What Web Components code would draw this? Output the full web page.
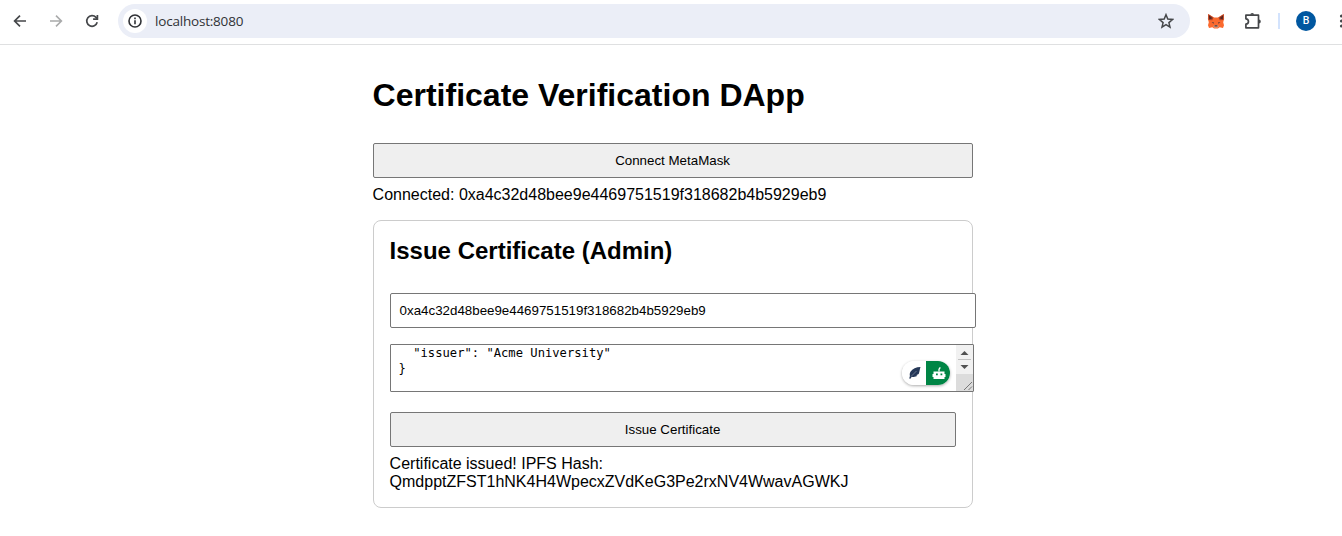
<!DOCTYPE html>
<html lang="en">
<head>
<meta charset="utf-8">
<title>Certificate Verification DApp</title>
<style>
html, body { margin: 0; height: 100%; overflow: hidden; background: #fff; }
body { font-family: "Liberation Sans", Arial, sans-serif; font-size: 16px; color: #000; }
</style>
</head>
<body>
<browser-toolbar>localhost:8080</browser-toolbar>
<dapp-page>
  <action-button>Connect MetaMask</action-button>
  <status-text slot="status">Connected: 0xa4c32d48bee9e4469751519f318682b4b5929eb9</status-text>
  <issue-card slot="card">
    <span slot="title">Issue Certificate (Admin)</span>
    <address-field slot="fields">0xa4c32d48bee9e4469751519f318682b4b5929eb9</address-field>
    <metadata-field slot="fields">  "issuer": "Acme University"
}</metadata-field>
    <action-button slot="fields">Issue Certificate</action-button>
    <status-text slot="fields">Certificate issued! IPFS Hash: QmdpptZFST1hNK4H4WpecxZVdKeG3Pe2rxNV4WwavAGWKJ</status-text>
  </issue-card>
</dapp-page>
<script>
function define(name, markup) {
  const template = document.createElement('template');
  template.innerHTML = markup;
  customElements.define(name, class extends HTMLElement {
    constructor() {
      super();
      this.attachShadow({ mode: 'open' }).appendChild(template.content.cloneNode(true));
    }
  });
}

define('browser-toolbar', `
<style>
:host { display: flex; align-items: center; box-sizing: border-box; height: 45px; width: 1355px; padding: 0 0 3px 12px; border-bottom: 1px solid #dfe0e1; background: #fff; }
svg { display: block; flex: none; }
.nav { display: flex; gap: 20px; width: 106px; flex: none; }
.bar { display: flex; align-items: center; box-sizing: border-box; width: 1072px; height: 34px; padding: 0 16px 0 4px; border-radius: 17px; background: #ebeef7; flex: none; }
.info { display: grid; place-items: center; width: 24px; height: 24px; margin: 0 1px; border-radius: 50%; background: #fff; }
.url { flex: 1; margin-left: 7px; font: 13.5px/20px "Open Sans", sans-serif; letter-spacing: -.2px; color: #303236; }
.fox { margin-left: 17px; }
.ext { margin-left: 18px; }
.sep { width: 2px; height: 16px; margin-left: 15px; background: #d3e3fd; flex: none; }
.avatar { display: grid; place-items: center; width: 20px; height: 20px; margin-left: 16px; border-radius: 50%; background: #0057a0; color: #fff; font: 500 10.5px/20px Roboto, sans-serif; flex: none; }
.menu { margin-left: 16px; }
</style>
<div class="nav">
  <svg width="16" height="16" viewBox="0 0 16 16" fill="none" stroke="#45474a" stroke-width="1.7"><path d="M14 8H3M8 2.6 2.6 8 8 13.4"/></svg>
  <svg width="16" height="16" viewBox="0 0 16 16" fill="none" stroke="#a9aaab" stroke-width="1.6"><path d="M2 8h11M8 2.6 13.4 8 8 13.4"/></svg>
  <svg width="16" height="16" viewBox="0 0 16 16" fill="none" stroke="#45474a" stroke-width="1.7"><path d="M13.2 9.3A5.3 5.3 0 1 1 12 4.4L13.2 5.7"/><path d="M13.4 2v4.2H9.1"/></svg>
</div>
<div class="bar">
  <div class="info"><svg width="16" height="16" viewBox="0 0 16 16" fill="none" stroke="#303236" stroke-width="1.6"><circle cx="8" cy="8" r="6"/><path d="M8 7.2v4M8 4.6v1.6"/></svg></div>
  <div class="url"><slot></slot></div>
  <svg width="16" height="16" viewBox="0 0 16 16" fill="none" stroke="#45474a" stroke-width="1.5"><path d="m8 1.7 1.8 4.4 4.7.4-3.6 3.1 1.1 4.6L8 11.7l-4 2.5 1.1-4.6-3.6-3.1 4.700-.4z"/></svg>
</div>
<svg class="fox" width="18" height="16" viewBox="0 0 18 16">
  <path d="M1.200 1 7 4.600h4L16.800 1l.3 5-.9 3.200.8 3-1 2.800-3.300-.7-1.800 1.200H7.100l-1.800-1.200-3.300.7-1-2.800.8-3L.9 6z" fill="#fb6a2e"/>
  <path d="M1.200 1 6.500 4.400 5.300 7.200 1.400 7zM16.800 1l-5.300 3.400 1.200 2.800 3.900-.2z" fill="#b5452a"/>
  <path d="M1.900 2.200 5.600 5.300 2.200 6.600zM16.100 2.200l-3.700 3.100 3.400 1.300z" fill="#5b251d"/>
  <path d="m4.600 8.900 2.400.6-.5 1.200zM13.400 8.900l-2.400.6.500 1.200z" fill="#4b3b3f"/>
  <path d="m6.300 13 1.400-1h2.600l1.400 1-.8 1.500H7.100z" fill="#dfa58c"/><path d="M7.600 12.300h2.800l.3 1.300H7.300z" fill="#4a3230"/>
</svg>
<svg class="ext" width="20" height="20" viewBox="0 0 20 20" fill="none" stroke="#45474a" stroke-width="1.700"><path d="M2.900 4.200h12.600v12.600H2.900v-3.600c3.400-.4 3.400-5 0-5.400z" stroke-linejoin="round"/><path d="M7.300 3.800a1.900 1.900 0 0 1 3.800 0zM15.900 8.600a1.900 1.900 0 0 1 0 3.800z" fill="#45474a" stroke="none"/></svg>
<div class="sep"></div>
<div class="avatar">B</div>
<svg class="menu" width="18" height="16" viewBox="0 0 18 16" fill="#45474a"><circle cx="9.500" cy="3" r="1.600"/><circle cx="9.500" cy="8" r="1.600"/><circle cx="9.500" cy="13" r="1.600"/></svg>
`);

define('dapp-page', `
<style>
:host { display: block; width: 600px; margin-left: 372.6px; padding-top: 32px; }
h1 { margin: 0 0 30px; font-size: 32px; line-height: 36px; font-weight: 700; }
</style>
<h1>Certificate Verification DApp</h1>
<slot></slot><slot name="status"></slot><slot name="card"></slot>
`);

define('action-button', `
<style>
:host { display: block; }
button { display: block; box-sizing: border-box; width: 100%; height: 35px; padding: 0 8px; border: 1px solid #767676; border-radius: 2px; background: #efefef; color: #000; font: 13.333px "Liberation Sans", Arial, sans-serif; }
</style>
<button><slot></slot></button>
`);

define('status-text', `
<style>:host { display: block; margin-top: 8px; line-height: 18px; }</style>
<slot></slot>
`);

define('issue-card', `
<style>
:host { display: block; box-sizing: border-box; height: 288px; margin-top: 16px; padding: 16px; border: 1px solid #ccc; border-radius: 8px; }
h2 { margin: 0 0 28px; font-size: 24px; line-height: 28px; font-weight: 700; }
</style>
<h2><slot name="title"></slot></h2>
<slot name="fields"></slot>
`);

define('address-field', `
<style>:host { display: block; box-sizing: border-box; width: 586px; height: 35px; margin-bottom: 16px; padding: 0 9px; border: 1px solid #767676; border-radius: 2px; background: #fff; font-size: 13.333px; line-height: 33px; white-space: nowrap; }</style>
<slot></slot>
`);

define('metadata-field', `
<style>
:host { display: flex; position: relative; box-sizing: border-box; width: 584px; height: 48px; margin-bottom: 20px; border: 1px solid #767676; border-radius: 1px; background: #fff; }
.text { flex: 1; padding: 1px 0 0 8px; font: 12.170px/15px "DejaVu Sans Mono", monospace; white-space: pre; }
.scroll { width: 17px; display: block; }
.tools { position: absolute; right: 22.600px; bottom: 6px; display: flex; width: 48px; height: 24px; border-radius: 12px; overflow: hidden; background: #fff; }
.shade { position: absolute; right: 22.600px; bottom: 6px; width: 48px; height: 24px; border-radius: 12px; box-shadow: 0 1px 3px #0005; }
</style>
<div class="text"><slot></slot></div>
<svg class="scroll" width="17" height="46" viewBox="0 0 17 46">
  <path fill="#f1f1f1" d="M0 0h17v29H0z"/><path fill="#dcdcdc" d="M0 29h17v17H0z"/>
  <path fill="#505050" d="m4.500 10 4-4 4 4zM4.500 20h8l-4 4z"/><path fill="#c1c1c1" d="M2 14h13v1H2z"/>
  <path d="m8 45 8-8M12.500 45l3.500-3.500" stroke="#777" fill="none"/>
</svg>
<div class="shade"></div>
<div class="tools">
  <svg width="48" height="24" viewBox="0 0 48 24">
    <path fill="#008545" d="M24 0h24v24H24z"/>
    <path fill="#253858" d="M18.500 6c-4.300.100-8 1.600-10 4.800-.8 1.300-.9 2.800-.6 4.100L7.200 17.500l1.200.2 1.400-1.900c2 .5 4.200.2 5.600-1.200l-1.400-.3 2.700-1.200c.8-1.900 1-4.800 1.800-7.100z"/>
    <path d="m9 15.500 5.500-5.500" stroke="#8d98ab" stroke-width=".6"/>
    <path fill="#fff" d="M31.500 10.500h11V13h1v3h-1v2h-11v-2h-1v-3h1z"/><path d="M37 10.500V8.300l1.300-2" stroke="#fff" stroke-width="1.300" fill="none"/>
    <path fill="#008545" d="M34 12.500h1.800v1.800H34zM38.500 12.500h1.800v1.800h-1.800z"/>
  </svg>
</div>
`);
</script>
</body>
</html>
